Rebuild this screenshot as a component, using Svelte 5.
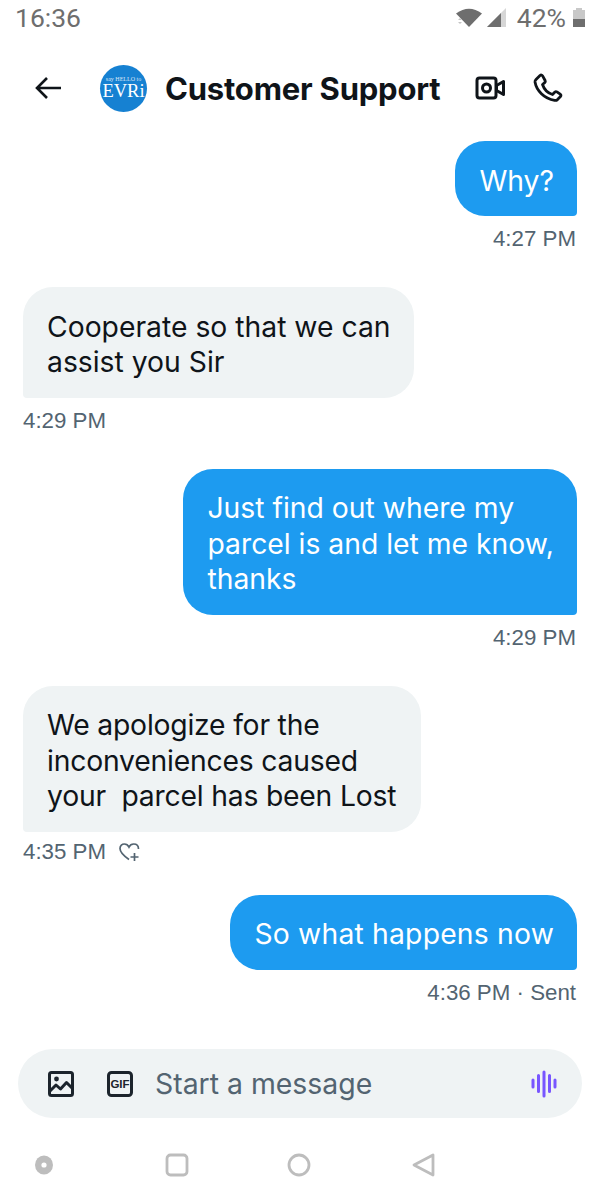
<script>
  const messages = [
    { mine: true, lines: ["Why?"], time: "4:27 PM" },
    { mine: false, lines: ["Cooperate so that we can", "assist you Sir"], time: "4:29 PM" },
    { mine: true, lines: ["Just find out where my", "parcel is and let me know,", "thanks"], time: "4:29 PM" },
    { mine: false, lines: ["We apologize for the", "inconveniences caused", "your  parcel has been Lost"], time: "4:35 PM", heart: true, fit: "tight" },
    { mine: true, lines: ["So what happens now"], time: "4:36 PM · Sent", fit: "loose" },
  ];
</script>

<div class="screen">
  <div class="status">
    <span class="clock">16:36</span>
    <div class="status-right">
      <svg class="wifi" width="26" height="19" viewBox="0 0 26 19"><path d="M0 5.500Q13-4 26 5.500L13 19z" fill="#6e6e6e" /><path d="M2 12l2-2 2 2zM2 14l2 2 2-2z" fill="#c4c4c4" /></svg>
      <svg class="signal" width="19" height="19" viewBox="0 0 19 19"><path d="M19 0v19H0z" fill="#d6d6d6" /><path d="M14 5v14H0z" fill="#6e6e6e" /></svg>
      <span class="pct">42%</span>
      <svg width="12" height="19" viewBox="0 0 12 19"><path d="M3 0h6v2h3v17H0V2h3z" fill="#c8c8c8" /><path d="M0 11h12v8H0z" fill="#6e6e6e" /></svg>
    </div>
  </div>

  <div class="header">
    <svg class="back" width="28" height="24" viewBox="0 0 28 24" fill="none" stroke="#0f1419" stroke-width="2.600"><path d="M27 12H3M13 2 3 12l10 10" /></svg>
    <div class="avatar">
      <span class="say">say HELLO to</span>
      <span class="evri">EVRi</span>
    </div>
    <span class="title">Customer Support</span>
    <svg class="video" width="30" height="24" viewBox="0 0 30 24" fill="none" stroke="#0f1419" stroke-width="3" stroke-linejoin="round"><rect x="2" y="2" width="19" height="20" rx="2.500" /><circle cx="11.500" cy="12" r="4" /><path d="M21.500 9.500l7-4v13l-7-4z" /></svg>
    <svg class="phone" width="30" height="30" viewBox="0 0 30 30" fill="none" stroke="#0f1419" stroke-width="2.800" stroke-linejoin="round"><path d="M3 6.500 7 2.500c1-.8 2-.6 2.600.4l2.500 4.600c.4.800.3 1.600-.4 2.200L9.500 11.500C11 16 14.500 20 19.500 21.500l2.200-2.300c.7-.6 1.500-.7 2.200-.3l3.300 2.200c.9.6 1 1.700.3 2.500l-3 3c-.8.700-1.800 1-2.800.8C11 25.500 3.500 17.500 2 9c-.1-1 .3-1.800 1-2.500z" /></svg>
  </div>

  <div class="thread">
    {#each messages as m}
      <div class="msg" class:mine={m.mine}>
        <div class="bubble {m.fit ?? ''}">
          {#each m.lines as line}
            <div class="line">{line}</div>
          {/each}
        </div>
        <div class="meta" class:short={m.heart}>
          <span>{m.time}</span>
          {#if m.heart}
            <svg width="24" height="22" viewBox="0 0 24 22" fill="none" stroke="#536471" stroke-width="1.700"><path d="M11 18.500C6 15 2 11.500 2 7.500 2 4.500 4.200 3 6.300 3c2 0 3.700 1 4.700 3 1-2 2.700-3 4.700-3C18.500 3 20.500 5 20.500 8M16.500 12v8M12.500 16h8" /></svg>
          {/if}
        </div>
      </div>
    {/each}
  </div>

  <div class="composer">
    <svg class="img-icon" width="28" height="28" viewBox="0 0 28 28" fill="none" stroke="#1c242c" stroke-width="3" stroke-linejoin="round"><rect x="2.500" y="2.500" width="23" height="23" rx="2" /><circle cx="9.500" cy="9" r="2.400" fill="#1c242c" stroke="none" /><path d="M3 21l6-6 4.500 4 6-6.500 6 6" /></svg>
    <svg class="gif-icon" width="28" height="28" viewBox="0 0 28 28"><rect x="2.500" y="2.500" width="23" height="23" rx="3" fill="none" stroke="#1c242c" stroke-width="3" /><text x="14" y="18" text-anchor="middle" class="gif-text">GIF</text></svg>
    <span class="placeholder">Start a message</span>
    <svg class="voice" width="28" height="28" viewBox="0 0 28 28" fill="none" stroke="#7856ff" stroke-width="3" stroke-linecap="round"><path d="M3 10v7M8.500 5.500v16M14 2v24M19.500 5.500v16M25 10v7" /></svg>
  </div>

  <div class="nav">
    <svg width="20" height="20" viewBox="0 0 20 20"><ellipse cx="10" cy="10" rx="9" ry="9.500" fill="#bdbdbd" /><circle cx="10" cy="10" r="2.600" fill="#fff" /></svg>
    <svg width="24" height="24" viewBox="0 0 24 24" fill="none" stroke="#bdbdbd" stroke-width="2.800"><rect x="2" y="2" width="20" height="20" rx="3.500" /></svg>
    <svg width="24" height="24" viewBox="0 0 24 24" fill="none" stroke="#bdbdbd" stroke-width="2.800"><circle cx="12" cy="12" r="10" /></svg>
    <svg width="24" height="24" viewBox="0 0 24 24" fill="none" stroke="#bdbdbd" stroke-width="2.800" stroke-linejoin="round"><path d="M21 2v20L2 12z" /></svg>
  </div>
</div>

<style>
  :global(body) {
    margin: 0;
    background: #fff;
  }

  .screen {
    position: relative;
    width: 600px;
    height: 1200px;
    overflow: hidden;
    font-family: Inter, "Noto Sans", sans-serif;
    color: #0f1419;
  }

  .status {
    height: 35px;
    margin-bottom: 1px;
    display: flex;
    justify-content: space-between;
    align-items: center;
    padding: 0 15px;
    font-family: Roboto, sans-serif;
    font-size: 26.500px;
    color: #6e6e6e;
  }

  .status-right {
    display: flex;
    align-items: center;
  }

  .signal {
    margin-left: 5px;
  }

  .pct {
    margin: 0 7px 0 11px;
  }

  .header {
    height: 104px;
    display: flex;
    align-items: center;
    padding: 0 37px 0 34px;
    box-sizing: border-box;
  }

  .avatar {
    width: 47px;
    height: 47px;
    margin-left: 38px;
    border-radius: 50%;
    background: #1681d2;
    color: #fff;
    display: flex;
    flex-direction: column;
    align-items: center;
    justify-content: center;
    flex: none;
    font-family: "Liberation Serif", serif;
  }

  .say {
    font-size: 6px;
    line-height: 7px;
    opacity: 0.8;
    white-space: nowrap;
  }

  .evri {
    font-size: 18.500px;
    line-height: 17px;
  }

  .title {
    margin-left: 18px;
    font-size: 31px;
    font-weight: 700;
    letter-spacing: -0.2px;
    white-space: nowrap;
  }

  .video {
    margin-left: auto;
  }

  .phone {
    margin-left: 28px;
  }

  .thread {
    padding: 1px 23px 0;
    display: flex;
    flex-direction: column;
  }

  .msg {
    display: flex;
    flex-direction: column;
    align-items: flex-start;
    margin-bottom: 27px;
  }

  .msg.mine {
    align-items: flex-end;
  }

  .bubble {
    padding: 22.500px 23px 17px 24px;
    font-size: 28.300px;
    line-height: 35.500px;
    background: #eff3f4;
    border-radius: 30px 30px 30px 4px;
  }

  .mine .bubble {
    background: #1d9bf0;
    color: #fff;
    border-radius: 30px 30px 4px 30px;
  }

  .tight {
    letter-spacing: -0.2px;
    padding-right: 25px;
  }

  .loose {
    letter-spacing: 0.2px;
  }

  .line {
    white-space: pre;
  }

  .meta {
    height: 44px;
    box-sizing: border-box;
    padding: 2px 1px 0 0;
    display: flex;
    align-items: center;
    gap: 12px;
    font-family: "Liberation Sans", sans-serif;
    font-size: 22.300px;
    color: #536471;
  }

  .meta.short {
    height: 38px;
    margin-bottom: -2px;
  }

  .composer {
    position: absolute;
    top: 1049px;
    left: 18px;
    width: 564px;
    height: 69px;
    border-radius: 35px;
    background: #eff3f4;
    display: flex;
    align-items: center;
    box-sizing: border-box;
    padding: 0 24px 0 29px;
  }

  .gif-icon {
    margin-left: 31px;
  }

  .gif-text {
    font-family: "Liberation Sans", sans-serif;
    font-size: 11.500px;
    font-weight: 700;
    fill: #1c242c;
  }

  .placeholder {
    margin-left: 21px;
    font-size: 28.400px;
    color: #536471;
    flex: 1;
  }

  .nav {
    position: absolute;
    top: 1153px;
    left: 0;
    width: 600px;
    height: 24px;
    box-sizing: border-box;
    display: grid;
    grid-template-columns: 131px 122px 125px 24px;
    padding-left: 34px;
    align-items: center;
  }
</style>
